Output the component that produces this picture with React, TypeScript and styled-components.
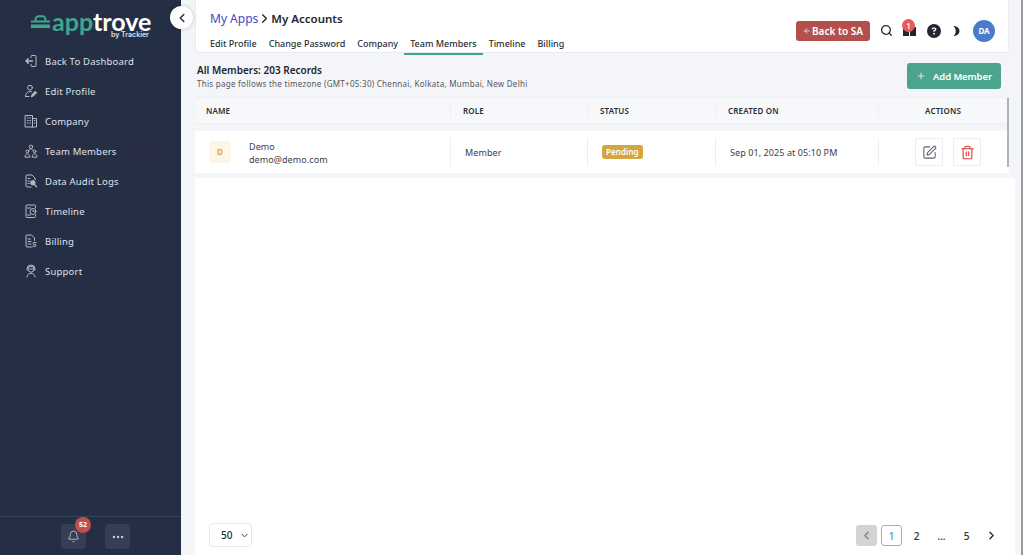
import React from "react";
import styled, { createGlobalStyle } from "styled-components";
import {
  ChevronLeft,
  ChevronRight,
  ChevronDown,
  Search,
  Bell,
  Ellipsis,
  Plus,
  ArrowLeft,
  SquarePen,
  Trash2,
} from "lucide-react";
import { FaCircleQuestion } from "react-icons/fa6";

const GlobalStyle = createGlobalStyle`
  html, body, #root {
    margin: 0;
    height: 100%;
  }
  body {
    font-family: "Noto Sans", "Open Sans", sans-serif;
    background: #fff;
    overflow: hidden;
  }
  * { box-sizing: border-box; }
`;

const SideIcon = ({ children }: { children: React.ReactNode }) => (
  <svg width="14" height="14" viewBox="0 0 14 14" fill="none" stroke="#b4b9c5" strokeWidth="1" strokeLinecap="round" strokeLinejoin="round">
    {children}
  </svg>
);

const menu = [
  {
    label: "Back To Dashboard",
    icon: (
      <>
        <path d="M7 3.5V2.5a1 1 0 0 1 1-1h3a1 1 0 0 1 1 1v9a1 1 0 0 1-1 1H8a1 1 0 0 1-1-1v-1" />
        <path d="M8.5 7H2M4.2 4.8 2 7l2.2 2.2" strokeWidth="1.4" />
      </>
    ),
  },
  {
    label: "Edit Profile",
    icon: (
      <>
        <circle cx="6" cy="3.7" r="2.4" />
        <path d="M1.5 12.5c0-3 1.8-5 4.3-5 .8 0 1.4.2 2 .5M1.5 12.5h3.5" />
        <path d="M7.5 12.5l.4-1.8 3.4-3.4 1.4 1.4-3.4 3.4z" fill="#b4b9c5" />
      </>
    ),
  },
  {
    label: "Company",
    icon: (
      <>
        <rect x="1.5" y="1.5" width="7" height="11.5" />
        <path d="M8.5 4.5h4V13h-4M3.5 4h.8M5.8 4h.8M3.5 6.5h.8M5.8 6.5h.8M3.5 9h.8M5.8 9h.8M10.3 6.5h.6M10.3 9h.6" />
      </>
    ),
  },
  {
    label: "Team Members",
    active: true,
    icon: (
      <>
        <circle cx="7" cy="2.8" r="1.7" />
        <circle cx="3.4" cy="7.4" r="1.4" />
        <circle cx="10.6" cy="7.4" r="1.4" />
        <path d="M4.6 6.8C4.8 5.6 5.8 5 7 5s2.2.6 2.4 1.8M1 12.8c0-1.7 1-2.9 2.4-2.9s2.4 1.2 2.4 2.9zM8.2 12.8c0-1.7 1-2.9 2.4-2.9s2.4 1.2 2.4 2.9z" />
      </>
    ),
  },
  {
    label: "Data Audit Logs",
    icon: (
      <>
        <path d="M7 13H3a1 1 0 0 1-1-1V2a1 1 0 0 1 1-1h5l3 3v2" />
        <path d="M4 4.5h2M4 7h1.5M4 9.5h1" />
        <circle cx="8.8" cy="8.8" r="2.2" fill="#b4b9c5" />
        <path d="M10.4 10.4 12.5 12.8" strokeWidth="1.3" />
      </>
    ),
  },
  {
    label: "Timeline",
    icon: (
      <>
        <path d="M11.5 4V2a1 1 0 0 0-1-1H3a1 1 0 0 0-1 1v10.5a1 1 0 0 0 1 1h7.5a1 1 0 0 0 1-1V11" />
        <circle cx="9" cy="7.5" r="3" />
        <path d="M9 6.2v1.3h1.2M3.5 11h3M3.5 4h3" />
      </>
    ),
  },
  {
    label: "Billing",
    icon: (
      <>
        <path d="M8 13H3a1 1 0 0 1-1-1V2a1 1 0 0 1 1-1h4.5L10.5 4v2.5" />
        <path d="M4 5h2.5M4 7.5h3M4 10h3" />
        <path d="M12 8.5H10a.9.9 0 0 0 0 1.9h1a.9.9 0 0 1 0 1.9H9" />
      </>
    ),
  },
  {
    label: "Support",
    icon: (
      <>
        <circle cx="7" cy="5.2" r="3" />
        <path d="M3 6V5a4 4 0 0 1 8 0v1M5.5 5h3M3 13c0-2 1.6-3.6 4-3.6S11 11 11 13" />
      </>
    ),
  },
];

const tabs = ["Edit Profile", "Change Password", "Company", "Team Members", "Timeline", "Billing"];

const App = () => {
  return (
    <Page>
      <GlobalStyle />
      <Sidebar>
        <Logo>
          <LogoRow>
            <svg width="19" height="13" viewBox="0 0 19 13">
              <path d="M4.5 6V4.5a3.2 3.2 0 0 1 3.2-3.2h3.6a3.2 3.2 0 0 1 3.2 3.2V6" fill="none" stroke="#3fa58c" strokeWidth="2" />
              <rect x="0" y="5.5" width="19" height="2" fill="#3fa58c" />
              <rect x="0" y="9.5" width="19" height="3.5" fill="#3fa58c" />
            </svg>
            <LogoWord>
              <LogoGreen>app</LogoGreen>trove
            </LogoWord>
          </LogoRow>
          <LogoSub>by Trackier</LogoSub>
        </Logo>
        <Menu>
          {menu.map((item) => (
            <MenuItem key={item.label} $active={item.active}>
              <SideIcon>{item.icon}</SideIcon>
              {item.label}
            </MenuItem>
          ))}
        </Menu>
        <SideFooter>
          <FooterBtn>
            <Bell size={13} strokeWidth={1.4} color="#d5d8df" />
            <NotifBadge>52</NotifBadge>
          </FooterBtn>
          <FooterBtn>
            <Ellipsis size={14} strokeWidth={2.2} color="#c6cad3" />
          </FooterBtn>
        </SideFooter>
        <Toggle>
          <ChevronLeft size={14} strokeWidth={2.6} color="#2b3140" />
        </Toggle>
      </Sidebar>
      <Main>
        <Header>
          <HeaderLeft>
            <Crumbs>
              <CrumbLink>My Apps</CrumbLink>
              <ChevronRight size={15} strokeWidth={2} color="#23262d" />
              <CrumbCurrent>My Accounts</CrumbCurrent>
            </Crumbs>
            <Tabs>
              {tabs.map((tab) => (
                <Tab key={tab} $active={tab === "Team Members"}>
                  {tab}
                </Tab>
              ))}
            </Tabs>
          </HeaderLeft>
          <HeaderRight>
            <BackBtn>
              <ArrowLeft size={8} strokeWidth={2} />
              Back to SA
            </BackBtn>
            <Search size={13} strokeWidth={2.4} color="#23262d" />
            <GiftWrap>
              <svg width="13" height="16" viewBox="0 0 13 16">
                <path d="M0 7h5.5L6.5 8.5 7.5 7H13v9H7V10H6v6H0z" fill="#23262d" />
              </svg>
              <GiftBadge>1</GiftBadge>
            </GiftWrap>
            <FaCircleQuestion size={14} color="#23262d" />
            <MoonIcon width="7" height="10" viewBox="0 0 7 10">
              <path d="M.5 0c3.5 0 6 2.2 6 5s-2.5 5-6 5c1.5-1.2 2.2-3 2.2-5S2 1.2.5 0z" fill="#23262d" />
            </MoonIcon>
            <Avatar>DA</Avatar>
          </HeaderRight>
        </Header>
        <TitleRow>
          <div>
            <Title>All Members: 203 Records</Title>
            <Subtitle>This page follows the timezone (GMT+05:30) Chennai, Kolkata, Mumbai, New Delhi</Subtitle>
          </div>
          <AddBtn>
            <Plus size={10} strokeWidth={1.8} />
            Add Member
          </AddBtn>
        </TitleRow>
        <TableWrap>
          <HeadRow>
            <HeadCell $w={256} $first>NAME</HeadCell>
            <HeadCell $w={137}>ROLE</HeadCell>
            <HeadCell $w={128}>STATUS</HeadCell>
            <HeadCell $w={163}>CREATED ON</HeadCell>
            <HeadCell $w={128} $center $last>ACTIONS</HeadCell>
          </HeadRow>
          <BodyRow>
            <NameCell $w={256}>
              <Initial>D</Initial>
              <NameText>
                <div>Demo</div>
                <div>demo@demo.com</div>
              </NameText>
            </NameCell>
            <Cell $w={137}>Member</Cell>
            <Cell $w={128}>
              <StatusPill>Pending</StatusPill>
            </Cell>
            <Cell $w={163}>Sep 01, 2025 at 05:10 PM</Cell>
            <ActionsCell $w={128}>
              <ActionBtn>
                <SquarePen size={15} strokeWidth={1.7} color="#5d6070" />
              </ActionBtn>
              <ActionBtn>
                <Trash2 size={15} strokeWidth={1.8} color="#e03a3a" />
              </ActionBtn>
            </ActionsCell>
          </BodyRow>
        </TableWrap>
        <Panel>
          <PageSize>
            50
            <ChevronDown size={11} strokeWidth={2} />
          </PageSize>
          <Pager>
            <PrevBtn>
              <ChevronLeft size={13} strokeWidth={2.4} color="#7c7f87" />
            </PrevBtn>
            <PageBtn $active>1</PageBtn>
            <PageBtn>2</PageBtn>
            <PageBtn>...</PageBtn>
            <PageBtn>5</PageBtn>
            <PageBtn>
              <ChevronRight size={13} strokeWidth={2.4} color="#23262d" />
            </PageBtn>
          </Pager>
        </Panel>
      </Main>
    </Page>
  );
};

export default App;

const Page = styled.div`
  display: flex;
  width: 1024px;
  height: 555px;
  overflow: hidden;
`;

const Sidebar = styled.aside`
  position: relative;
  width: 181px;
  flex: none;
  display: flex;
  flex-direction: column;
  background: #242f45;
`;

const Logo = styled.div`
  height: 46px;
  padding: 12px 0 0 31px;
`;

const LogoRow = styled.div`
  display: flex;
  align-items: center;
  gap: 2px;
  height: 18px;
`;

const LogoWord = styled.span`
  font-family: Lato, sans-serif;
  font-size: 25px;
  font-weight: 700;
  line-height: 18px;
  color: #fff;
`;

const LogoGreen = styled.span`
  color: #3fa58c;
`;

const LogoSub = styled.div`
  margin: 0 0 0 80px;
  padding-top: 1px;
  font-family: Inter, sans-serif;
  font-size: 7px;
  font-weight: 600;
  line-height: 7px;
  color: #dfe2e8;
  white-space: nowrap;
`;

const Menu = styled.nav`
  display: flex;
  flex-direction: column;
  padding: 0 14px;
`;

const MenuItem = styled.div<{ $active?: boolean }>`
  display: flex;
  align-items: center;
  gap: 7px;
  height: 30px;
  padding-left: 10px;
  font-size: 9.5px;
  letter-spacing: 0.2px;
  color: #dfe2e8;
  border-radius: 4px;
  background: ${({ $active }) => ($active ? "#272e43" : "transparent")};
`;

const SideFooter = styled.div`
  margin-top: auto;
  height: 39px;
  border-top: 1px solid #36415a;
  display: flex;
  justify-content: center;
  align-items: flex-start;
  gap: 19px;
  padding: 7px 0 0 10px;
`;

const FooterBtn = styled.div`
  position: relative;
  width: 25px;
  height: 25px;
  border-radius: 4px;
  background: #353e54;
  display: flex;
  align-items: center;
  justify-content: center;
`;

const NotifBadge = styled.span`
  position: absolute;
  top: -7px;
  right: -5px;
  width: 16px;
  height: 16px;
  border-radius: 50%;
  background: #bf4f4c;
  color: #fff;
  font-size: 7px;
  font-weight: 700;
  line-height: 16px;
  text-align: center;
`;

const Toggle = styled.div`
  position: absolute;
  top: 6px;
  left: 170px;
  width: 23px;
  height: 23px;
  border-radius: 50%;
  background: #fff;
  box-shadow: 0 0 4px rgba(0, 0, 0, 0.2);
  display: flex;
  align-items: center;
  justify-content: center;
`;

const Main = styled.main`
  flex: 1;
  min-width: 0;
  padding-left: 14px;
  margin-right: 1px;
  border-right: 2px solid #96989b;
  background: #f4f5f9;
  display: flex;
  flex-direction: column;
`;

const Header = styled.header`
  width: 814px;
  height: 53px;
  flex: none;
  background: #fff;
  border: 1px solid #e9ebf0;
  border-top: none;
  border-radius: 0 0 4px 4px;
  display: flex;
  justify-content: space-between;
`;

const HeaderLeft = styled.div`
  padding: 10px 0 0 14px;
`;

const Crumbs = styled.div`
  display: flex;
  align-items: center;
  height: 17px;
  font-size: 12px;
  line-height: 17px;
`;

const CrumbLink = styled.span`
  color: #4a46c4;
  margin-right: -1px;
`;

const CrumbCurrent = styled.span`
  margin-left: -1px;
  font-size: 11.5px;
  font-weight: 600;
  color: #23262d;
`;

const Tabs = styled.div`
  display: flex;
  margin: 5px 0 0 -6px;
`;

const Tab = styled.div<{ $active?: boolean }>`
  height: 23px;
  padding: 5px 6px 0;
  font-size: 9px;
  font-weight: 500;
  line-height: 13px;
  color: #2b2e36;
  border-bottom: 2px solid ${({ $active }) => ($active ? "#3fa58c" : "transparent")};
  white-space: nowrap;
`;

const HeaderRight = styled.div`
  display: flex;
  align-items: center;
  gap: 11px;
  padding: 9px 13px 0 0;
`;

const BackBtn = styled.div`
  display: flex;
  align-items: center;
  gap: 1px;
  width: 74px;
  height: 20px;
  margin-right: -1px;
  justify-content: center;
  border-radius: 3px;
  background: #b34f4c;
  color: #fff;
  font-size: 10px;
  font-weight: 600;
`;

const GiftWrap = styled.div`
  position: relative;
  display: flex;
  margin-top: -5px;
  margin-left: -1px;
`;

const GiftBadge = styled.span`
  position: absolute;
  top: -1px;
  left: -1px;
  width: 13px;
  height: 13px;
  border-radius: 50%;
  background: #e85a5a;
  color: #fff;
  font-size: 8px;
  font-weight: 600;
  line-height: 13px;
  text-align: center;
`;

const MoonIcon = styled.svg`
  margin-left: 1px;
`;

const Avatar = styled.div`
  width: 22px;
  height: 22px;
  margin-left: 2px;
  border-radius: 50%;
  background: #4a7cc9;
  color: #fff;
  font-size: 8px;
  font-weight: 700;
  line-height: 22px;
  text-align: center;
`;

const TitleRow = styled.div`
  width: 806px;
  height: 44px;
  flex: none;
  display: flex;
  justify-content: space-between;
  align-items: flex-start;
  padding: 10px 0 0 2px;
`;

const Title = styled.div`
  font-size: 10px;
  font-weight: 600;
  line-height: 14px;
  color: #23262d;
`;

const Subtitle = styled.div`
  padding-top: 1px;
  font-size: 8px;
  line-height: 12px;
  letter-spacing: 0.28px;
  color: #55585f;
`;

const AddBtn = styled.div`
  display: flex;
  align-items: center;
  justify-content: center;
  gap: 7px;
  width: 94px;
  height: 26px;
  border-radius: 3px;
  background: #4da48e;
  color: #fff;
  font-size: 9.5px;
  font-weight: 600;
  letter-spacing: -0.1px;
`;

const TableWrap = styled.div`
  width: 814px;
  flex: none;
  position: relative;
  border-top: 1px solid #eceef2;

  /* table scrollbar */
  &::after {
    content: "";
    position: absolute;
    top: 0;
    right: 0;
    width: 2px;
    height: 69px;
    background: #b0b3b8;
  }
`;

const HeadRow = styled.div`
  display: flex;
  align-items: center;
  height: 26px;
  background: #f7f8f9;
  border-bottom: 1px solid #eceef2;
`;

const HeadCell = styled.div<{ $w: number; $center?: boolean; $last?: boolean; $first?: boolean }>`
  width: ${({ $w }) => $w}px;
  height: 12px;
  line-height: 12px;
  padding-left: ${({ $center, $first }) => ($center ? "0" : $first ? "11px" : "12px")};
  text-align: ${({ $center }) => ($center ? "center" : "left")};
  font-size: 8px;
  font-weight: 600;
  letter-spacing: 0.15px;
  color: #2b2e36;
  border-right: ${({ $last }) => ($last ? "none" : "1px solid #eceef2")};
`;

const BodyRow = styled.div`
  display: flex;
  align-items: center;
  height: 42px;
  margin-top: 7px;
  background: #fff;
`;

const Cell = styled.div<{ $w: number }>`
  display: flex;
  align-items: center;
  width: ${({ $w }) => $w}px;
  height: 28px;
  padding-left: 14px;
  font-size: 9px;
  letter-spacing: 0.08px;
  color: #3a3d45;
  border-right: 1px solid #eceef2;
`;

const NameCell = styled(Cell)`
  gap: 18px;
  line-height: 13px;
`;

const NameText = styled.div`
  margin-top: 2px;
`;

const ActionsCell = styled(Cell)`
  border-right: none;
  gap: 10px;
  padding-left: 36px;
`;

const Initial = styled.div`
  width: 22px;
  height: 22px;
  border-radius: 3px;
  background: #fbf6e6;
  color: #d9a93c;
  font-size: 8px;
  font-weight: 700;
  line-height: 22px;
  text-align: center;
`;

const StatusPill = styled.span`
  height: 14px;
  padding: 0 4px;
  border-radius: 3px;
  background: #d5a53e;
  color: #fff;
  font-size: 8px;
  font-weight: 600;
  line-height: 14px;
`;

const ActionBtn = styled.div`
  width: 28px;
  height: 28px;
  flex: none;
  border: 1px solid #eceef2;
  display: flex;
  align-items: center;
  justify-content: center;
`;

const Panel = styled.div`
  width: 820px;
  flex: 1;
  margin-top: 5px;
  background: #fff;
  border-radius: 3px 3px 0 0;
  display: flex;
  align-items: flex-end;
  justify-content: space-between;
  padding: 0 13px 8px 14px;
`;

const PageSize = styled.div`
  display: flex;
  align-items: center;
  gap: 7px;
  width: 43px;
  height: 24px;
  padding-left: 11px;
  border: 1px solid #e6e8ec;
  border-radius: 4px;
  font-size: 10px;
  font-weight: 500;
  color: #23262d;
`;

const Pager = styled.div`
  display: flex;
  align-items: center;
  gap: 4px;
  margin-bottom: 1px;
`;

const PrevBtn = styled.div`
  width: 21px;
  height: 21px;
  border-radius: 3px;
  background: #d3d3d3;
  display: flex;
  align-items: center;
  justify-content: center;
`;

const PageBtn = styled.div<{ $active?: boolean }>`
  width: 21px;
  height: 21px;
  border-radius: 3px;
  border: 1px solid ${({ $active }) => ($active ? "#7cc4b2" : "transparent")};
  color: ${({ $active }) => ($active ? "#4da48e" : "#2b2e36")};
  font-size: 10px;
  font-weight: 500;
  display: flex;
  align-items: center;
  justify-content: center;
`;
